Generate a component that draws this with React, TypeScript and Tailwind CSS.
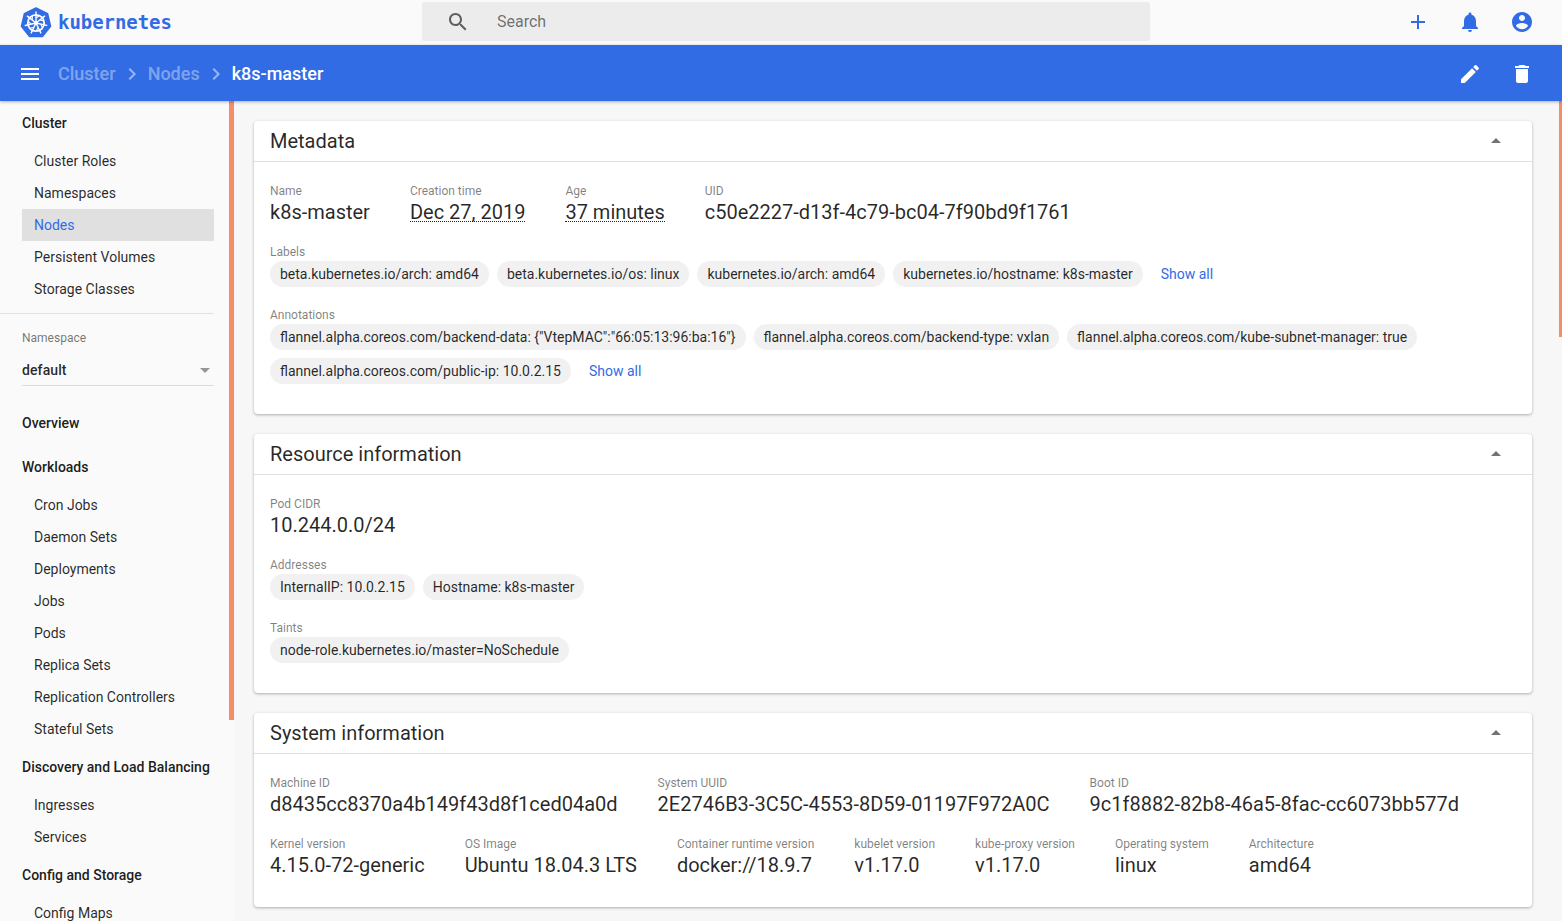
import React from 'react'

const paths = {
  menu: 'M3 18h18v-2H3v2zm0-5h18v-2H3v2zm0-7v2h18V6H3z',
  search: 'M15.5 14h-.79l-.28-.27C15.41 12.59 16 11.11 16 9.5 16 5.91 13.09 3 9.5 3S3 5.91 3 9.5 5.91 16 9.5 16c1.61 0 3.09-.59 4.23-1.57l.27.28v.79l5 4.99L20.49 19l-4.99-5zm-6 0C7.01 14 5 11.99 5 9.5S7.01 5 9.5 5 14 7.01 14 9.5 11.99 14 9.5 14z',
  add: 'M19 13h-6v6h-2v-6H5v-2h6V5h2v6h6v2z',
  bell: 'M12 22c1.1 0 2-.9 2-2h-4c0 1.1.89 2 2 2zm6-6v-5c0-3.07-1.64-5.64-4.5-6.32V4c0-.83-.67-1.5-1.5-1.5s-1.5.67-1.5 1.5v.68C7.63 5.36 6 7.92 6 11v5l-2 2v1h16v-1l-2-2z',
  account: 'M12 2C6.48 2 2 6.48 2 12s4.48 10 10 10 10-4.48 10-10S17.52 2 12 2zm0 3c1.66 0 3 1.34 3 3s-1.34 3-3 3-3-1.34-3-3 1.34-3 3-3zm0 14.2c-2.5 0-4.71-1.28-6-3.22.03-1.99 4-3.08 6-3.08 1.99 0 5.97 1.09 6 3.08-1.29 1.94-3.5 3.22-6 3.22z',
  edit: 'M3 17.25V21h3.75L17.81 9.94l-3.75-3.75L3 17.25zM20.71 7.04c.39-.39.39-1.02 0-1.41l-2.34-2.34c-.39-.39-1.02-.39-1.41 0l-1.83 1.83 3.75 3.75 1.83-1.83z',
  trash: 'M6 19c0 1.1.9 2 2 2h8c1.1 0 2-.9 2-2V7H6v12zM19 4h-3.5l-1-1h-5l-1 1H5v2h14V4z',
  chevron: 'M10 6L8.59 7.41 13.17 12l-4.58 4.59L10 18l6-6z',
  up: 'M7 14l5-5 5 5z',
  down: 'M7 10l5 5 5-5z',
}

function Icon({ name, className }: { name: keyof typeof paths; className: string }) {
  return (
    <svg viewBox="0 0 24 24" className={className} fill="currentColor">
      <path d={paths[name]} />
    </svg>
  )
}

function Logo() {
  const spokes = [0, 51.4, 102.8, 154.3, 205.7, 257.1, 308.6]
  return (
    <svg viewBox="0 0 32 32" className="w-[32px] h-[32px]">
      <path d="M16 1 L27.6 6.6 L30.6 19.3 L22.4 29.5 L9.6 29.5 L1.4 19.3 L4.4 6.6 Z" fill="#326ce5" stroke="#326ce5" strokeWidth="1.5" strokeLinejoin="round" />
      <circle cx="16" cy="16" r="8.2" fill="none" stroke="#fff" strokeWidth="1.8" />
      <circle cx="16" cy="16" r="2" fill="#fff" />
      {spokes.map(a => (
        <g key={a} transform={`rotate(${a} 16 16)`}>
          <line x1="16" y1="16" x2="16" y2="5" stroke="#fff" strokeWidth="1.4" strokeLinecap="round" />
          <line x1="16" y1="11" x2="19" y2="9" stroke="#fff" strokeWidth="1.1" />
        </g>
      ))}
    </svg>
  )
}

function NavHead({ label }: { label: string }) {
  return <div className="h-[44px] flex items-center pl-[22px] text-sm font-medium text-black/90">{label}</div>
}

function NavItem({ label, active }: { label: string; active?: boolean }) {
  return (
    <div className={`h-[32px] w-[192px] ml-[22px] pl-[12px] flex items-center text-sm ${active ? 'bg-[#e0e0e0] text-[#326ce5]' : 'text-black/85'}`}>
      {label}
    </div>
  )
}

function Sidebar() {
  return (
    <aside className="relative w-[234px] shrink-0 bg-[#fafafa] overflow-hidden">
      <NavHead label="Cluster" />
      <NavItem label="Cluster Roles" />
      <NavItem label="Namespaces" />
      <NavItem label="Nodes" active />
      <NavItem label="Persistent Volumes" />
      <NavItem label="Storage Classes" />
      <div className="w-[214px] h-px bg-[#e0e0e0] mt-[8px]" />
      <div className="ml-[22px] w-[192px] h-[87px] pt-[16px]">
        <div className="text-xs text-black/55 leading-4">Namespace</div>
        <div className="mt-[8px] h-[32px] flex items-center justify-between border-b border-[#dcdcdc] text-sm font-medium text-black/85 tracking-[0.1px]">
          default
          <Icon name="down" className="w-[24px] h-[24px] -mr-[3px] text-black/40" />
        </div>
      </div>
      <NavHead label="Overview" />
      <NavHead label="Workloads" />
      <NavItem label="Cron Jobs" />
      <NavItem label="Daemon Sets" />
      <NavItem label="Deployments" />
      <NavItem label="Jobs" />
      <NavItem label="Pods" />
      <NavItem label="Replica Sets" />
      <NavItem label="Replication Controllers" />
      <NavItem label="Stateful Sets" />
      <NavHead label="Discovery and Load Balancing" />
      <NavItem label="Ingresses" />
      <NavItem label="Services" />
      <NavHead label="Config and Storage" />
      <NavItem label="Config Maps" />
      <div className="absolute right-0 top-0 w-[5px] h-[619px] bg-[#f38e68]" />
    </aside>
  )
}

function Card({ title, children }: { title: string; children: React.ReactNode }) {
  return (
    <section className="bg-white rounded-[4px] shadow-[0_1px_3px_rgba(0,0,0,0.3)]">
      <header className="h-[41px] pl-[16px] pr-[24px] flex items-center justify-between border-b border-[#e0e0e0]">
        <span className="text-xl text-black/85">{title}</span>
        <Icon name="up" className="w-[24px] h-[24px] text-black/55" />
      </header>
      <div className="px-[16px] pt-[21px] pb-[30px]">{children}</div>
    </section>
  )
}

function Label({ children }: { children: React.ReactNode }) {
  return <div className="text-xs leading-4 text-black/50">{children}</div>
}

function Field({ label, value, dotted }: { label: string; value: string; dotted?: boolean }) {
  return (
    <div>
      <Label>{label}</Label>
      <div className="h-[25px] text-xl leading-[26px] text-black/85">
        {dotted ? <span className="inline-block h-[23px] leading-[26px] border-b border-dotted border-black/85">{value}</span> : value}
      </div>
    </div>
  )
}

function Chips({ label, items, showAll }: { label: string; items: string[]; showAll?: boolean }) {
  return (
    <div className="mt-[20px]">
      <Label>{label}</Label>
      <div className="mt-px flex flex-wrap gap-x-[8px] gap-y-[8px] items-center">
        {items.map(c => (
          <span key={c} className="h-[26px] px-[10px] rounded-full bg-[#f1f1f1] flex items-center text-sm text-black/85">{c}</span>
        ))}
        {showAll && <span className="ml-[10px] text-sm text-[#326ce5]">Show all</span>}
      </div>
    </div>
  )
}

function FieldRow({ fields, className }: { fields: { label: string; value: string; dotted?: boolean }[]; className?: string }) {
  return (
    <div className={`flex gap-x-[40px] ${className ?? ''}`}>
      {fields.map(f => (
        <Field key={f.label} {...f} />
      ))}
    </div>
  )
}

export default function App() {
  return (
    <div className="relative h-[921px] w-[1562px] overflow-hidden flex flex-col bg-[#f7f7f7] font-['Roboto',sans-serif]">
      <div className="h-[45px] shrink-0 bg-[#fafafa] flex items-center">
        <div className="w-[422px] shrink-0 flex items-center pl-[20px]">
          <Logo />
          <span className="ml-[6px] text-[#326ce5] font-bold text-[19px] font-['DejaVu_Sans_Mono',monospace] tracking-[-0.05px]">kubernetes</span>
        </div>
        <div className="w-[728px] h-[39px] -mt-[2px] rounded-[2px] bg-[#ececec] flex items-center pl-[24px]">
          <Icon name="search" className="w-[24px] h-[24px] text-black/60" />
          <span className="ml-[27px] text-base text-black/55">Search</span>
        </div>
        <div className="flex-1 -mt-[2px] flex justify-end items-center gap-x-[28px] pr-[28px]">
          <Icon name="add" className="w-[24px] h-[24px] text-[#326ce5]" />
          <Icon name="bell" className="w-[24px] h-[24px] text-[#326ce5]" />
          <Icon name="account" className="w-[24px] h-[24px] text-[#326ce5]" />
        </div>
      </div>

      <div className="relative z-10 h-[56px] pt-[2px] shrink-0 bg-[#326ce5] shadow-[0_1px_3px_rgba(0,0,0,0.3)] flex items-center text-white pl-[18px] pr-[28px]">
        <Icon name="menu" className="w-[24px] h-[24px]" />
        <span className="ml-[16px] text-lg font-medium text-white/40">Cluster</span>
        <Icon name="chevron" className="mx-[4px] w-[24px] h-[24px] text-white/50" />
        <span className="text-lg font-medium text-white/40">Nodes</span>
        <Icon name="chevron" className="mx-[4px] w-[24px] h-[24px] text-white/50" />
        <span className="text-lg font-medium">k8s-master</span>
        <div className="ml-auto flex items-center gap-x-[28px]">
          <Icon name="edit" className="w-[24px] h-[24px]" />
          <Icon name="trash" className="w-[24px] h-[24px]" />
        </div>
      </div>

      <div className="flex flex-1 min-h-0">
        <Sidebar />
        <main className="flex-1 pl-[20px] pr-[30px] pt-[20px] flex flex-col gap-y-[20px] overflow-hidden">
          <Card title="Metadata">
            <FieldRow
              fields={[
                { label: 'Name', value: 'k8s-master' },
                { label: 'Creation time', value: 'Dec 27, 2019', dotted: true },
                { label: 'Age', value: '37 minutes', dotted: true },
                { label: 'UID', value: 'c50e2227-d13f-4c79-bc04-7f90bd9f1761' },
              ]}
            />
            <Chips
              label="Labels"
              showAll
              items={[
                'beta.kubernetes.io/arch: amd64',
                'beta.kubernetes.io/os: linux',
                'kubernetes.io/arch: amd64',
                'kubernetes.io/hostname: k8s-master',
              ]}
            />
            <Chips
              label="Annotations"
              showAll
              items={[
                'flannel.alpha.coreos.com/backend-data: {"VtepMAC":"66:05:13:96:ba:16"}',
                'flannel.alpha.coreos.com/backend-type: vxlan',
                'flannel.alpha.coreos.com/kube-subnet-manager: true',
                'flannel.alpha.coreos.com/public-ip: 10.0.2.15',
              ]}
            />
          </Card>
          <Card title="Resource information">
            <FieldRow fields={[{ label: 'Pod CIDR', value: '10.244.0.0/24' }]} />
            <Chips label="Addresses" items={['InternalIP: 10.0.2.15', 'Hostname: k8s-master']} />
            <Chips label="Taints" items={['node-role.kubernetes.io/master=NoSchedule']} />
          </Card>
          <Card title="System information">
            <FieldRow
              fields={[
                { label: 'Machine ID', value: 'd8435cc8370a4b149f43d8f1ced04a0d' },
                { label: 'System UUID', value: '2E2746B3-3C5C-4553-8D59-01197F972A0C' },
                { label: 'Boot ID', value: '9c1f8882-82b8-46a5-8fac-cc6073bb577d' },
              ]}
            />
            <FieldRow
              className="mt-[20px]"
              fields={[
                { label: 'Kernel version', value: '4.15.0-72-generic' },
                { label: 'OS Image', value: 'Ubuntu 18.04.3 LTS' },
                { label: 'Container runtime version', value: 'docker://18.9.7' },
                { label: 'kubelet version', value: 'v1.17.0' },
                { label: 'kube-proxy version', value: 'v1.17.0' },
                { label: 'Operating system', value: 'linux' },
                { label: 'Architecture', value: 'amd64' },
              ]}
            />
          </Card>
        </main>
      </div>
      <div className="absolute right-0 top-[101px] w-[3px] h-[236px] bg-[#f38e68]" />
    </div>
  )
}
